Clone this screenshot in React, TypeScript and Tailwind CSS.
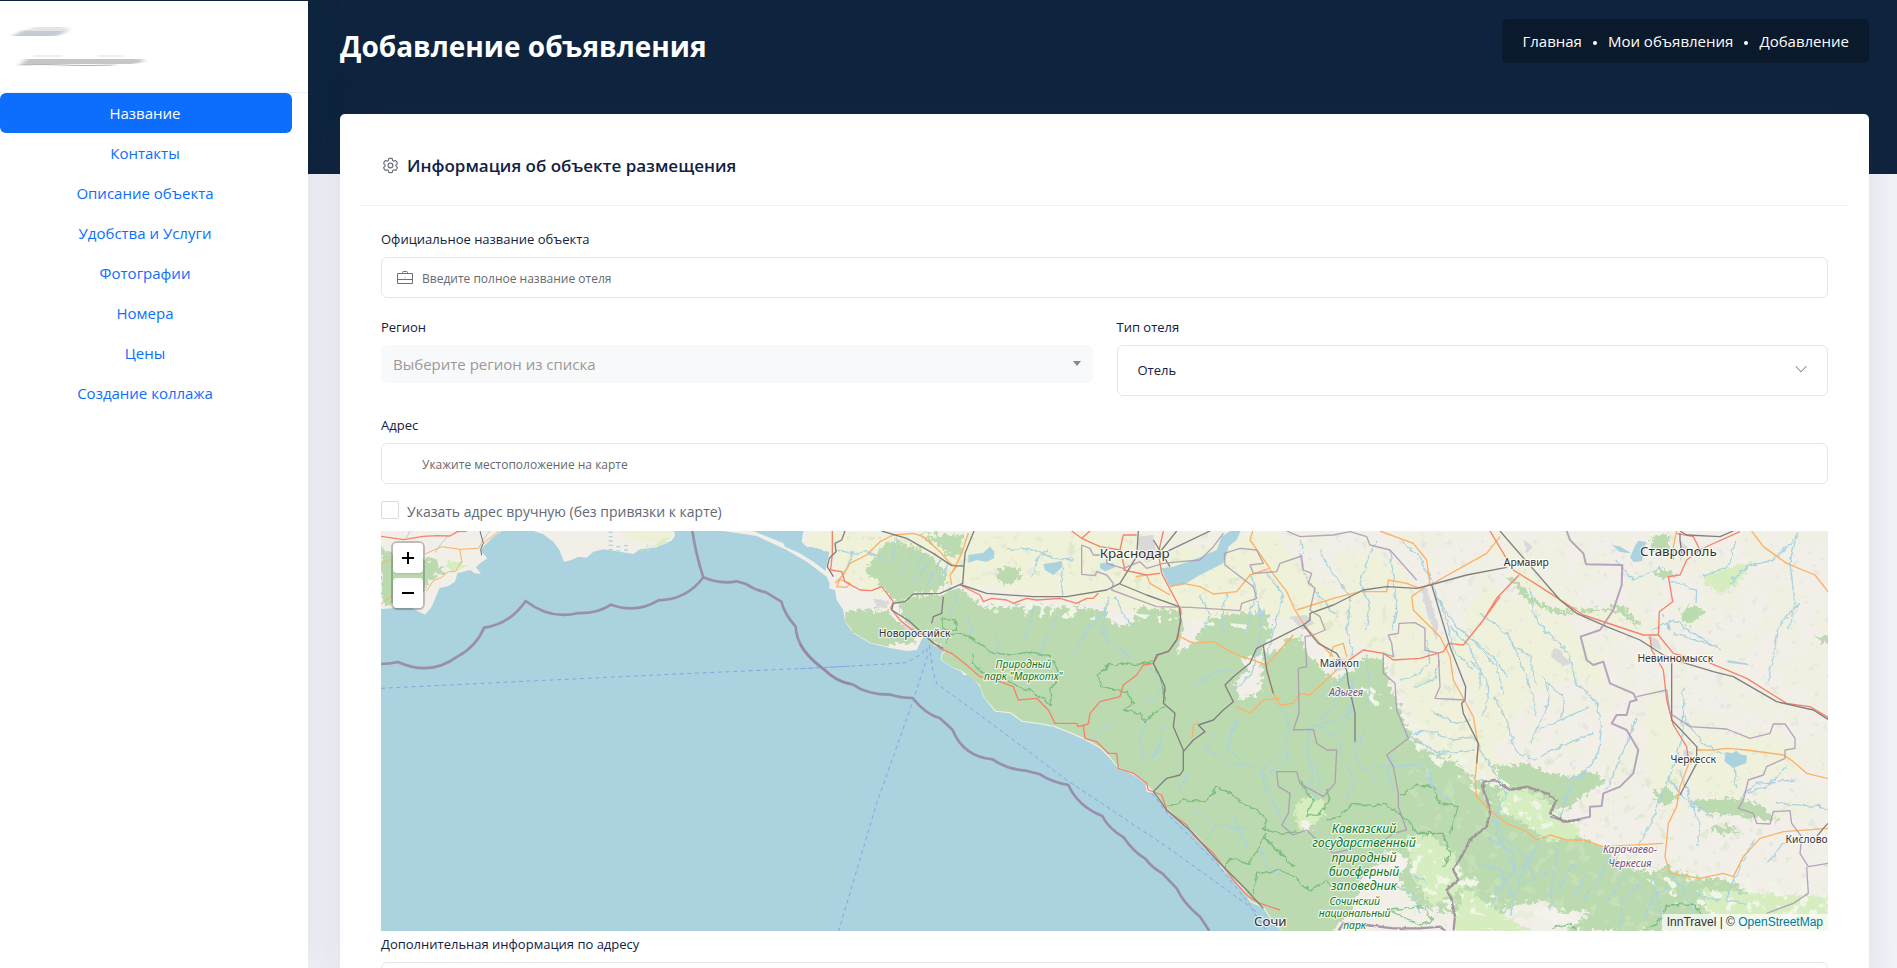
import { ReactNode, useState } from 'react'
import { HiOutlineCog6Tooth } from 'react-icons/hi2'
import { TfiAngleDown } from 'react-icons/tfi'
import { clsx } from 'clsx'

const navItems = [
  'Название',
  'Контакты',
  'Описание объекта',
  'Удобства и Услуги',
  'Фотографии',
  'Номера',
  'Цены',
  'Создание коллажа',
]

const crumbs = ['Главная', 'Мои объявления', 'Добавление']

function BriefcaseIcon({ className }: { className?: string }) {
  return (
    <svg viewBox="0 0 16 14" fill="none" stroke="currentColor" className={className}>
      <path d="M.5 2.5h15v10H.5zM.5 8.5h15" />
      <path d="M5.5 2.5V1.5Q5.5.5 6.5.5h3q1 0 1 1v1" />
      <path d="M7.5 6.5h1" strokeOpacity=".6" />
    </svg>
  )
}

function Sidebar() {
  const [active, setActive] = useState(navItems[0])

  return (
    <aside className="relative w-[308px] shrink-0 bg-white border-t border-[#0e243e] shadow-[0_0_40px_rgba(40,45,60,0.1)]">
      <div className="h-23 border-b border-[#eff0f2]">
        <svg className="w-40 h-20" viewBox="0 0 160 80" aria-hidden="true">
          <defs>
            <filter id="smear" x="-10%" y="-50%" width="120%" height="200%">
              <feGaussianBlur stdDeviation="3 .7" />
            </filter>
          </defs>
          <g filter="url(#smear)">
            <path d="M12 35 24 29 68 28 64 32 56 35z" fill="#c5cbd2" />
            <path d="M34 26h34l-4 4H26z" fill="#e2e5e8" />
            <path d="M20 64 26 58 142 58 143 61 132 63 60 63z" fill="#c6c6c6" />
            <path d="M34 55h28M98 55h26" stroke="#dcdcdc" />
            <path d="M20 64q25-1 44 0t50 0" stroke="#b0b0b0" fill="none" />
          </g>
        </svg>
      </div>
      <nav className="flex flex-col pr-4">
        {navItems.map((item) => (
          <button
            key={item}
            type="button"
            onClick={() => setActive(item)}
            className={clsx(
              'h-10 pr-0.5 rounded-md text-[15px]',
              item === active ? 'bg-[#0d6efd] text-white font-medium' : 'text-[#0d6efd] hover:text-[#0a58ca]'
            )}
          >
            {item}
          </button>
        ))}
      </nav>
    </aside>
  )
}

function TextField({
  id,
  label,
  placeholder,
  icon,
}: {
  id: string
  label: string
  placeholder?: string
  icon?: ReactNode
}) {
  return (
    <div>
      <label htmlFor={id} className="block text-[13px] leading-5 mb-2">
        {label}
      </label>
      <div className="relative">
        {icon && <span className="absolute left-4 top-1/2 -translate-y-1/2 text-[#6c6f80]">{icon}</span>}
        <input
          id={id}
          type="text"
          placeholder={placeholder}
          className="block w-full h-[41px] pl-10 pr-4 pt-0.5 text-[12px] border border-[#e5e7ea] rounded-md placeholder:text-[#666a70] focus:outline-none focus:border-[#0d6efd]"
        />
      </div>
    </div>
  )
}

/*
 * Static map of the Kuban coast, three units to a pixel.
 * The western part and the mainland keep their own origins.
 */
function MapDrawing() {
  return (
    <svg
      viewBox="0 0 4341 1200"
      preserveAspectRatio="xMidYMid slice"
      className="block w-full h-full"
      fill="none"
      strokeLinejoin="round"
      role="img"
      aria-label="Карта"
    >
      <defs>
        <filter id="rough" x="-5%" y="-5%" width="110%" height="110%">
          <feTurbulence type="fractalNoise" baseFrequency=".07" numOctaves="4" seed="4" />
          <feDisplacementMap in="SourceGraphic" scale="40" xChannelSelector="R" yChannelSelector="G" />
        </filter>
        <filter id="wiggle" x="-5%" y="-5%" width="110%" height="110%">
          <feTurbulence type="fractalNoise" baseFrequency=".05" numOctaves="2" seed="9" />
          <feDisplacementMap in="SourceGraphic" scale="18" xChannelSelector="R" yChannelSelector="G" />
        </filter>
        <filter id="jitter" x="-5%" y="-5%" width="110%" height="110%">
          <feTurbulence type="fractalNoise" baseFrequency=".08" numOctaves="2" seed="9" />
          <feDisplacementMap in="SourceGraphic" scale="9" xChannelSelector="R" yChannelSelector="G" />
        </filter>
        <filter id="fields" x="0" y="0" width="100%" height="100%">
          <feTurbulence type="fractalNoise" baseFrequency=".012" numOctaves="5" seed="12" />
          <feColorMatrix values="0 0 0 0 .86  0 0 0 0 .88  0 0 0 0 .7  12 0 0 0 -5.6" />
          <feComponentTransfer>
            <feFuncA type="linear" slope=".45" />
          </feComponentTransfer>
          <feComposite in2="SourceGraphic" operator="in" />
        </filter>
        <filter id="meadow" x="0" y="0" width="100%" height="100%">
          <feTurbulence type="fractalNoise" baseFrequency=".03" numOctaves="5" seed="31" />
          <feColorMatrix values="0 0 0 0 .66  0 0 0 0 .84  0 0 0 0 .54  0 14 0 0 -8.6" />
          <feComponentTransfer>
            <feFuncA type="linear" slope=".35" />
          </feComponentTransfer>
          <feComposite in2="SourceGraphic" operator="in" />
        </filter>
        <filter id="bare" x="0" y="0" width="100%" height="100%">
          <feTurbulence type="fractalNoise" baseFrequency=".03" numOctaves="5" seed="77" />
          <feColorMatrix values="0 0 0 0 .87  0 0 0 0 .92  0 0 0 0 .78  0 0 14 0 -8.2" />
          <feComposite in2="SourceGraphic" operator="in" />
        </filter>
        <filter id="specks" x="0" y="0" width="100%" height="100%">
          <feTurbulence type="fractalNoise" baseFrequency=".035" numOctaves="3" seed="52" />
          <feColorMatrix values="0 0 0 0 .7  0 0 0 0 .7  0 0 0 0 .7  0 0 16 0 -10.8" />
          <feComponentTransfer>
            <feFuncA type="linear" slope=".4" />
          </feComponentTransfer>
          <feComposite in2="SourceGraphic" operator="in" />
        </filter>
        <filter id="groves" x="0" y="0" width="100%" height="100%">
          <feTurbulence type="fractalNoise" baseFrequency=".03" numOctaves="4" seed="18" />
          <feColorMatrix values="0 0 0 0 .6  0 0 0 0 .76  0 0 0 0 .48  0 16 0 0 -10.6" />
          <feComponentTransfer>
            <feFuncA type="linear" slope=".4" />
          </feComponentTransfer>
          <feComposite in2="SourceGraphic" operator="in" />
        </filter>
      </defs>

      <rect width="4341" height="1200" fill="#aad3df" />

      {/* Crimea and Taman */}
      <g transform="translate(-33 -123)">
        <path
          fill="#f2efe9"
          d="M33 123H395L370 140 345 165 330 180 352 205 330 220 318 232 333 252 315 250 300 240 262 250 255 275 235 288 208 295 198 320 185 350 165 374 120 352 33 357z"
        />
        <path
          fill="#f2efe9"
          d="M490 123 520 133 550 155 568 180 582 215 605 210 625 200 650 203 670 185 700 178 740 184 790 192 810 178 860 172 905 152 915 138 912 123z"
        />
        <path fill="#eef0d5" d="M740 123h172l-8 20-60 12-50-4z" />
        <path fill="#bcdab0" filter="url(#rough)" d="M33 178 60 182 80 205 140 200 205 212 220 245 180 270 165 300 130 340 60 350 33 330z" />
        <path fill="#d6edc0" filter="url(#rough)" d="M225 215h50l20 12-40 15-30-8zM790 182l50-14 50-20 10 8-60 18z" />
        <path stroke="#aad3df" strokeWidth="12" strokeDasharray="4 9" d="M722 125v56M745 168v16M768 165v20" />
        <path stroke="#aad3df" strokeWidth="3" d="M360 123l-20 25-12 22M232 140l-22 25-14 22M120 123l-10 20" />
        <path stroke="#f6826b" strokeWidth="4" d="M33 139 100 149 160 139 200 137 240 138 262 125 290 124" />
        <path stroke="#fcb165" strokeWidth="3" d="M388 123 345 155 325 175 270 178 215 170 165 192M33 220 60 208M270 178 275 215 255 245 235 245 215 262 190 272 170 302M33 342 65 318" />
        <path stroke="#707070" strokeWidth="3" d="M330 123 340 160 332 178 335 196" />
        <path stroke="#9787a5" strokeWidth="8" strokeOpacity=".9" d="M967 123Q978 195 1000 262Q950 330 865 331Q800 371 723 344Q680 372 625 369Q540 390 467 333Q420 402 342 413Q320 468 262 500Q180 560 84 516Q60 522 33 522M1000 262Q1050 284 1100 274L1130 283Q1155 300 1188 307L1234 335Q1243 372 1277 410Q1280 480 1362 538Q1400 575 1440 582" />
        <path stroke="#86a4e6" strokeWidth="3" strokeDasharray="12 11" d="M33 595 400 577 900 553 1440 529" />
      </g>

      {/* mainland */}
      <g transform="translate(1257 -33)">
        <path
          fill="#f2efe9"
          d="M10 33 5 65 20 80 90 85 75 160 90 185 87 205 105 210 110 240 130 270 135 305 160 340 210 370 265 383 320 393 350 390 362 365 370 350 388 358 402 378 440 388 425 400 422 420 460 445 485 455 490 465 510 465 540 500 550 530 585 575 630 580 665 605 715 612 760 620 810 640 855 660 900 685 925 710 955 745 1000 765 1035 790 1040 815 1060 820 1090 860 1130 895 1180 940 1200 965 1230 995 1270 1050 1330 1110 1350 1145 1390 1165 1410 1195 1445 1233H3084V33z"
        />
        <path fill="#f2efe9" d="M-232 33H-140L-50 70-45 80 0 100 40 125 80 155 95 160V205L80 170 20 125-40 90-130 48z" />
        <path fill="#f0f1d9" filter="url(#jitter)" d="M20 38H1050L1090 90 1300 70 1370 38 1420 38 1480 110 1560 190 1620 230 1640 420 1580 380 1500 290 1100 300 800 230 500 190 350 200 250 230 120 180 100 100 20 75z" />
        <path fill="#f0f1dc" filter="url(#rough)" d="M1600 100 1780 120 1860 240 1950 420 1990 560 2060 620 2120 780 2020 760 1900 690 1820 560 1780 430 1690 380 1640 300zM2040 200 2180 240 2300 300 2400 420 2420 500 2300 480 2200 520 2080 700 2020 560 1960 380zM2060 50 2180 140 2320 260 2500 260 2500 330 2300 280 2160 200zM2560 480 2620 600 2660 760 2580 840 2540 700zM2660 640 2960 660 3000 760 2840 780 2800 840 2680 830z" />
        <path filter="url(#fields)" fill="#fff" d="M90 40H3084V900L2300 900 1900 600 1600 420 1200 320 800 250 120 190z" />
        <path filter="url(#specks)" fill="#fff" d="M120 40H3084V950L2300 900 1900 500 1600 300 1200 220 800 200 160 180z" />
        <path filter="url(#groves)" fill="#fff" d="M140 50H1050L1600 250 2100 600 2300 700 3084 860V1130H2300L1900 680 1500 260 600 180 160 170z" />

        {/* forests */}
        <path
          fill="#bcdab0"
          d="M135 275 137 305 162 338 212 368 265 380 280 340 200 280zM440 390 428 402 424 420 460 443 487 453 540 495 552 530 587 572 632 577 667 602 717 609 762 617 812 637 857 657 902 682 927 707 957 742 1002 762 1037 787 1062 817 1092 857 1132 892 1182 937 1232 992 1272 1047 1332 1107 1352 1142 1392 1162 1412 1192 1447 1233H1600V1100L1300 900 1000 600 700 450z"
        />
        <g fill="#bcdab0" filter="url(#rough)">
          <path d="M190 150 220 120 250 70 300 65 350 85 400 110 430 150 440 190 400 215 340 222 300 250 270 235 240 190z" />
          <path d="M140 275 180 265 260 275 290 300 330 330 355 345 340 372 280 372 210 358 165 335 145 305z" />
          <path d="M290 255 350 225 420 225 470 205 500 220 550 260 620 262 700 255 780 262 860 260 910 280 960 320 1000 310 1010 260 1100 270 1140 270 1150 320 1130 400 1180 370 1220 300 1300 280 1400 280 1420 330 1380 400 1320 420 1350 450 1300 490 1320 540 1380 520 1390 400 1440 390 1460 350 1500 350 1520 400 1560 440 1600 480 1660 450 1690 410 1750 420 1770 500 1800 560 1830 640 1900 700 1960 720 2020 780 2100 800 2160 790 2200 810 2220 870 2300 930 2400 980 2500 1050 2640 1060 2700 1110 2620 1160 2500 1150 2300 1180 2200 1130 2100 1180 1950 1180 1840 1150 1800 1080 1750 1020 1700 1050 1650 1180 1600 1225 1460 1222 1420 1175 1370 1132 1340 1090 1280 1030 1210 945 1140 880 1080 825 1050 795 1005 745 955 728 905 670 855 645 805 622 725 595 675 590 615 565 565 515 505 445 435 395 390 350 330 320z" />
          <path d="M590 150 620 140 655 145 660 175 620 195 595 185zM360 45h125l5 60-30 10-50-40z" />
          <path d="M2080 740 2180 730 2240 760 2320 770 2360 750 2420 780 2360 820 2300 870 2220 840 2120 830zM2560 820l40-12 40 20-30 25-40-5zM2680 840l130-5 70 20 60 50-80-10-160-20zM2730 920l50-5 40 20-60 8z" />
          <path d="M2570 45h36l8 40-36 26-36-36zM2570 150h40l20 15-50 15zM2640 275l50-20 20 20-20 26-36 16zM3040 350h60v30z" />
          <path d="M2040 900 2200 930 2300 1000 2330 1080 2200 1150 2100 1140 2040 1000zM2600 1040 2680 1070 2780 1080 2840 1110 2820 1180 2900 1200 2800 1233 2300 1233 2360 1180 2440 1100z" />
          <path d="M2110 165 2160 190 2190 230 2250 262 2330 272 2400 265 2470 255 2500 290 2520 330 2490 300 2440 268 2380 280 2270 280 2190 250 2150 205z" />
        </g>
        <g fill="#d6edc0" filter="url(#rough)">
          <path d="M1480 860 1520 830 1570 840 1575 880 1540 920 1500 930z" />
          <path d="M1820 950 1900 950 1960 1000 1990 1100 1900 1160 1850 1090z" />
          <path d="M2700 170 2790 140 2860 130 2820 180 2780 220 2740 210zM2100 800 2160 805 2230 830 2300 900 2340 920 2320 960 2240 960 2160 900 2100 880zM2700 1110 3084 1130V1233H2750zM1990 1100 2100 1180 2200 1233H1960z" />
        </g>
        <g fill="#f4f2ea" filter="url(#rough)">
          <path d="M1755 990 1800 1000 1830 1030 1800 1060 1760 1040zM1500 910l20-10 15 20-20 15zM2220 1160l80 15 40 30-60 10-70-20z" />
        </g>
        <path filter="url(#bare)" fill="#fff" d="M500 215 900 270 1500 330 1900 650 2300 900 2200 940 1860 700 1800 640 1600 420 1300 320 900 300 600 290z" />
        <path filter="url(#meadow)" fill="#fff" d="M2080 760 2500 1000 3084 1100V1233H1820L1850 900 1780 640z" />
        <path filter="url(#bare)" fill="#fff" d="M1800 960 1900 980 2020 1060 2060 1120 2200 1160 2120 1200 1850 1150zM2500 1040 3084 1100V1200L2650 1180z" />

        {/* lakes and reservoirs */}
        <g fill="#aad3df">
          <path d="M505 105 550 98 570 80 583 95 582 115 560 125 530 120 505 128zM730 132 760 128 785 122 788 140 760 165 735 150zM900 130h40l5 12-30 12-15-10z" />
          <path d="M1083 145 1120 140 1180 120 1250 90 1265 50 1290 33 1322 33 1310 60 1285 80 1280 105 1270 130 1200 165 1150 195 1110 200 1095 170z" />
          <path d="M2490 112 2505 78 2515 62 2538 66 2532 95 2525 124 2500 126zM2436 74l25 6 33 20-35-4zM2777 696l20 4 12-8 10 10 22 5-2 22-40 15-26-20zM2780 420l60 10 8 6-62-8zM2598 305l12 10 2 18-10-6zM2585 280l8 6-4 8z" />
        </g>
        {/* towns */}
        <g fill="#d9d9d9" filter="url(#jitter)">
          <path d="M1010 50 1060 45 1070 110 1040 130 1015 90zM1468 290l50-5 25 25-35 20zM1590 420l50-5 5 30-40 10zM1860 200l20 5 35 110-5 50-30-90zM220 235l50 10-10 20-30-5zM300 305l40 15 25 30-40-10z" />
          <path d="M2260 380l20 10 30 40-20 10-35-30zM2545 345l30 15 10 30-30-10zM2650 690l30 5-5 40-25-15zM2170 60l30 20-20 20zM2640 60l30 30-30 30z" />
        </g>

        {/* rivers */}
        <g stroke="#aad3df" strokeWidth="4" filter="url(#wiggle)">
          <path d="M290 50l-12 40 5 30-10 20M340 90l-30 55-15 15M370 100l-25 55-8 30M395 115l-35 50-10 20M420 120l-25 50-15 30M445 130l-30 60M105 90l60 10 40-5 60 30M110 185l30-40 20-50M620 90l50-5 50 10 40 20 60 5M700 170l10-50 30-30M790 140l-5 60 5 30M930 230l-25 60-30 20-60 100M945 230l30 60 20 25M920 250l-10 60 15 50M450 200l20 40-20 40M500 290l15 40-10 40M585 340l10 40-25 30M700 260l-15 60-10 40M770 290l-30 60-20 50M900 320l20 40 70 50M1050 440l40 60-60 60M960 600l-60 30-15 25M1040 600l-20 60 10 50M1090 620l-10 60-30 40" />
          <path d="M1200 225l30 60-20 50M1280 220l-15 70 10 50M1350 160l20 60-20 60-10 60M1370 250l20 40M1180 500l60-40 60-10M1210 680l80 50 70 10M1160 760l-30 60M1370 240l15 60-15 100-15 60-60 60M1400 160l50 60-15 60-30 110-5 80M1440 550l25 60-10 60 10 60M1500 100l10 60 50 70 50 60M1560 90l30 60 60 80-10 100 20 80M1730 60l-30 70-20 60 30 60-10 80M1640 460l-60 80M1660 470l-15 120-50 60M1530 620l-10 80 20 60M1670 570l-60 30-80 20M1700 420l10 90-10 50M1730 780l-60-60-10-100M1720 740l90 0 60-10M1840 500l60-20 20-60" />
          <path d="M1180 870l60 40 110 20M1250 910l-30 50M1300 890l40 90M1380 980l20 60 40 20M1410 830l30 60 20 20M1540 840l20-60-20-60M1640 840l20-40-15-60M1390 760l30 60M1400 820l-20-60 60-60" />
          <path d="M1500 60l10 40M1800 60l60 50 50 110 30 80 20 90 60 60M1910 230l60 90 110 90 40 60M1940 310l60 60 40 80 0 60M2010 420l50 60 5 60-20 50M1800 480l60-20 30-40-10-60M1820 650l60-20 80 30 60-10M1890 570l80 40 40-10M1770 90l10 80 10 100-15 60" />
          <path d="M2190 200l10 80 40 60 60 50 30 100 60 60 15 70-10 80-40 60-60 20M2370 740l-60 60-30 100M2040 280l80 60 40 80 40 110 10 60M2230 470l20 60-30 80-30 60M2240 490l50 40-5 70M2370 560l-90 40-70 30M2380 640l-100 40-60 30M2510 590l-30 80-60 140M2650 500l-5 160-40 120-40 100-60 120M2650 590l60 80 90 50 10 90M2560 330l60-30 60 40 80 50M2620 340l130 40M2590 140l-90 40-50-60M2610 180l80 30-2 40M2810 60l-30 80-70 30M2990 40l-20 90 15 120-20 80M3000 250l-60 60-35 170M2980 60l-60 60-80 20-50 50" />
          <path d="M2640 750l40 110 20 60-10 60M2600 770l50 60 90 60M2840 1150l-60-10 20-60 60-120M2960 740l-60 60-60 20M2980 780l-110 10-50 40M2930 850l130 10 24 5M3000 950l-50 20-50 60" />
          <path d="M2080 530l40 70 30 100 60 20M2000 340l90 100 20 80M2130 370l60 40 20 90M1620 500l-20 60-40 40M1250 640l-40 60M1310 600l-30 80 40 40M1560 620l60 40 10 60M1470 700l-60 60M1540 780l-30 40M1700 620l-20 50M1780 700l-20 60 30 60M1860 740l40 60" />
        </g>
        <g stroke="#aad3df" strokeWidth="4" filter="url(#wiggle)">
          <path d="M2080 900l40 60 60 50 20 60M2060 950l80 50 10 80M2100 860l-10 80 60 120M2220 960l-60 110-30 120M2280 960l-20 110-10 100M2330 1020l-40 60-40 80M2440 990l-40 80-50 70M2560 1050l10 60 20 110M2530 1080l-60 60-10 90M2480 1060l-60 90M2610 1060l60 60 90 20M2640 1110l60 80M1790 1100l50 20 20 60M1830 1060l60 30" />
          <path d="M1810 640l110 60 100-10M2020 650l60 100 40 70-30 60M1960 850l-60-50-20-80M2040 1030l60 20 40 80M2180 1030l-60 40-50 90M2240 1060l-70 30M2360 1060l-40 70M2600 1100l-40 30-30 70" />
        </g>

        {/* protected areas */}
        <g stroke="#63b46e" strokeOpacity=".75" strokeWidth="4" filter="url(#wiggle)">
          <path d="M425 295l40 5 5 30-40-5zM440 375 445 345 490 340 540 370 580 400 640 405 690 395 750 410 770 440 780 470 750 510 755 555 690 510 650 500 610 470 550 460 520 430 515 400" />
          <path d="M900 495 895 465 930 430 990 435 1030 430 1060 425M900 500 940 510 980 515 1000 550 970 570 1020 580 1035 605 1060 580 1095 560M1065 440 1090 490 1095 550" />
          <path d="M1100 860 1150 840 1220 845 1240 820 1250 800 1290 820 1330 850 1370 870 1400 900 1390 930 1440 940 1500 935M1400 940 1360 1010 1350 1030 1290 1015 1270 1045M1360 1130 1370 1060 1440 1050 1480 1070 1530 1110 1580 1080 1600 1110M1390 950 1430 990 1460 1020 1480 1040" />
          <path d="M1580 900 1620 890 1660 850 1720 860 1750 850 1780 870 1815 890 1850 940 1930 940 1950 1000 1930 1040M1800 830 1850 795 1900 800 1920 850 1975 860 1950 940M1500 780l20 40 20 20-20 50 40-10 30-40-10-30" />
          <path d="M1765 1170 1870 1160 1900 1200 1860 1215zM2540 1233 2590 1190 2600 1155 2680 1152 2710 1190M2260 1225 2310 1210 2330 1233" />
        </g>

        {/* minor and trunk roads */}
        <g stroke="#fcb165" strokeWidth="4">
          <path d="M105 190 130 165 150 130 200 105 240 65 280 45 340 40 370 50 420 95 450 130 470 140 450 165 455 195M110 200 140 202 150 190 120 178zM505 40l-20 60-30 60" />
          <path d="M1007 170 1040 165 1050 190 1110 225M1110 200 1150 190 1200 200 1240 222 1310 215 1350 165 1410 145 1350 60 1358 33M1410 150 1460 215 1485 270 1510 310 1560 370 1600 410M1490 270 1600 235 1680 215 1760 215 1765 180 1820 190 1860 205M1140 350 1180 370 1240 365 1300 400 1400 435M1480 345 1400 435 1415 510 1440 555 1480 550 1500 520 1530 525 1610 450M1440 535 1390 540 1350 580 1310 560M1590 410 1600 380 1630 370 1640 410M1740 33 1840 70 1880 120 1890 190 1835 230 1840 270 1920 350 1950 410 1960 480 2020 590 2035 680 2025 780 2030 830 2060 860 2080 880 2120 910 2180 935 2210 960 2250 945 2300 960 2350 960 2410 980 2590 970M1890 195 2060 100 2100 50M1178 650 1180 615 1195 608" />
          <path d="M2690 690 2740 690 2780 685 2840 690 2950 705 2980 725 3020 760 3084 776M2670 720 2640 800 2630 860 2605 910 2595 1010 2610 1060 2700 1075 2770 1060 2800 1070 2830 1010 2880 955 2950 935 3084 925M2855 33 2890 80 2960 130 3045 165 3084 215M2620 120l0-40 10-47" />
        </g>
        <g stroke="#f6826b" strokeWidth="4">
          <path d="M97 33V100L92 150 125 155 135 185 180 210 215 212 245 200 280 245 272 265 300 300 330 325 380 350 420 385 455 400 500 435 540 470 600 485 640 500 655 540 710 535 745 570 765 610 830 610 835 620 865 612 870 580 900 545 960 530 970 495 1010 465 1030 435 1060 430 1075 405 1110 390 1135 350 1143 270 1085 160 1075 100 1090 33" />
          <path d="M480 195 540 225 550 245 575 235 620 240 640 250 680 235 710 240 780 235 830 250 860 235 880 235 895 220M850 615 855 655 890 665 925 700 950 700 955 745 1000 760 1040 790 1045 810 1085 825 1100 870 1160 915 1180 945 1240 1000 1300 1080 1345 1130 1380 1150 1440 1170" />
          <path d="M815 33 845 55 870 33M845 55 900 80 960 90M960 90 970 45 1010 45M970 150 1040 165 1080 160M960 85l15 65M1640 425 1690 390 1750 400 1780 420 1860 415 1930 395 1945 370 1990 375 2050 300 2100 230M2070 33 2140 150 2220 200 2350 285 2530 345 2575 345M2157 165 2090 235 2040 315" />
          <path d="M2575 345 2578 275 2618 245 2605 170 2640 165 2660 120 2700 90 2730 75 2820 35M2630 40 2680 50 2700 90M2575 345 2620 400 2720 425 2840 475 2960 550 3030 560 3084 592M2550 350 2555 390 2590 450 2600 540 2620 615 2660 680 2665 720" />
        </g>

        {/* railways */}
        <g stroke="#808080" strokeWidth="4">
          <path d="M135 33 125 60 105 70 108 95 88 115 82 140 100 170M245 33 320 55 400 100 455 137 492 138M522 33 495 100 488 190 420 220 340 222 315 245 280 250 275 270 330 305 400 370 430 385M485 195 560 220 700 230 800 230 920 210 960 190 1010 110 1015 33M430 230 425 280 400 290 395 310M960 192 1040 225 1137 260 1143 300 1130 360 1105 395 1070 405 1060 430 1080 470 1095 500 1090 550 1125 580 1120 620 1150 690 1150 750 1140 765 1100 775 1060 815" />
          <path d="M1060 815 1100 870 1180 940 1250 1020 1340 1110 1390 1165M1150 695 1180 660 1215 635 1195 615 1240 600 1270 570 1300 545 1275 495 1300 470 1350 430 1370 385 1460 340 1510 315 1530 300 1530 280 1600 255 1690 210 1760 200 1850 205 1890 195 2000 165 2120 142M1390 375 1400 450 1420 520M1510 315 1555 370 1610 400 1640 450 1645 490 1665 580 1665 665M1895 195 1950 380 1997 500 1995 540 1985 550 1990 580 2035 670 2030 730" />
          <path d="M1130 33 1085 90M1060 60l50 80M1100 95 1230 33M2100 33 2280 240 2330 280 2420 320 2520 360 2590 405 2640 425 2740 455 2800 470 2930 545 3040 570 3084 598M2615 405V600L2690 680V730L2640 825M2640 33 2660 45 2760 50 2800 33M3050 950l20-25 14-15M2640 40v20l5 40" />
        </g>

        {/* region borders */}
        <g stroke="#ab98b3" strokeWidth="4" strokeOpacity=".85">
          <path d="M845 75V163L885 167 890 155 920 165 940 190 935 210 1070 260 1170 262M845 75 870 85 880 105 920 105 920 130 970 145 1020 125 1040 145 1090 130 1140 125 1200 120 1240 80 1270 40" />
          <path d="M1170 262 1320 272 1325 250 1370 235 1360 200 1275 135 1273 100 1320 85 1370 90 1390 130 1350 135 1360 160 1430 155 1440 130 1505 108 1510 150 1535 160 1525 190 1545 205 1530 270 1560 290 1575 330 1540 345 1515 350 1520 440 1495 445 1497 580 1480 630 1540 628 1550 670 1580 690 1610 690 1605 790 1570 830 1500 790 1490 755 1430 755 1435 800 1470 820 1465 880 1445 915 1480 945 1520 930 1550 960 1600 1000 1660 985M1755 960 1780 940 1820 930 1795 860 1795 820 1780 740 1760 705 1825 655 1790 570 1785 490 1750 460 1750 400 1780 410 1775 370 1765 345 1795 340 1797 310 1845 308 1875 325 1875 390 1915 400 1920 500 1905 535 1995 540" />
          <path d="M1460 33 1500 50 1600 45 1650 35 1700 50 1710 75 1770 90 1850 180" />
          <path strokeWidth="6" d="M2300 33 2310 60 2350 100 2358 133 2467 135 2465 195 2440 270 2400 330 2342 350 2360 420 2380 435 2410 425 2430 490 2500 520 2510 540 2490 545 2480 585 2450 585 2435 610 2480 630 2515 690 2500 760 2460 800 2410 820 2405 858 2370 860 2370 890 2300 905 2250 890" />
          <path d="M2510 530 2600 510 2610 580 2670 620 2780 627 2850 655 2910 640 2920 612 2955 612 2985 655 2985 685 2955 690 2955 715 2900 740 2890 765 2845 780 2830 840 2815 865 2860 880 2870 910 2910 912 2920 875 2970 872 2975 910 3005 950 3000 1000 3025 1040 3084 1030M3020 1040 3025 1120 2980 1150 2900 1180" />
        </g>
        <path filter="url(#jitter)" stroke="#9a8896" strokeWidth="7" strokeOpacity=".85" d="M2050 785 2085 780 2130 810 2180 800 2240 820 2270 840 2250 880 2290 905 2340 900M2050 785 2050 810 2065 850 2070 880 2060 920 2010 960 1990 1000 1960 1050 1975 1080 1940 1110 1955 1140 1965 1190 1960 1233M1615 1233 1630 1210 1700 1215 1780 1225 1860 1225 1920 1220 1935 1233" />

        {/* state waters */}
        <path stroke="#9787a5" strokeWidth="8" strokeOpacity=".9" d="M0 372Q20 410 72 448Q110 486 158 493Q200 524 272 524Q300 533 338 534Q375 582 420 595L458 630Q490 710 578 718Q620 748 678 752L720 763Q755 786 805 795Q835 860 907 888Q925 925 972 953Q1000 995 1035 1015Q1055 1042 1087 1060L1130 1105Q1150 1150 1200 1190Q1215 1212 1228 1233" />
        <g stroke="#86a4e6" strokeWidth="3" strokeDasharray="12 10">
          <path d="M372 390 368 400 320 428 160 438 0 446M380 385 382 410 340 540 230 850 116 1233M388 375 398 450 410 490 560 600 800 780 1100 980 1350 1160 1400 1233M1055 820 1110 890 1250 1030 1370 1180" />
        </g>
      </g>

      <g
        fontFamily="Noto Sans, Open Sans, sans-serif"
        textAnchor="middle"
        stroke="#fff"
        strokeOpacity=".75"
        strokeWidth="7"
        fill="#333"
        fontSize="31"
        style={{ paintOrder: 'stroke' }}
      >
        <g fontSize="40">
          <text x="2261" y="81">Краснодар</text>
          <text x="3892" y="74">Ставрополь</text>
          <text x="2668" y="1186">Сочи</text>
        </g>
        <text x="1601" y="318">Новороссийск</text>
        <text x="2875" y="407">Майкоп</text>
        <text x="3436" y="106">Армавир</text>
        <text x="3883" y="393">Невинномысск</text>
        <text x="3937" y="697">Черкесск</text>
        <text x="4340" y="935" textAnchor="end">Кислово</text>
        <g fontStyle="italic" fill="#71547f">
          <text x="2895" y="495">Адыгея</text>
          <text x="3747" y="967">Карачаево-</text>
          <text x="3747" y="1007">Черкесия</text>
        </g>
        <g fontStyle="italic" fill="#0f7a1f" fontSize="31">
          <text x="1927" y="411">Природный</text>
          <text x="1927" y="447">парк "Маркотх"</text>
          <text x="2921" y="1122">Сочинский</text>
          <text x="2921" y="1158">национальный</text>
          <text x="2921" y="1194">парк</text>
        </g>
        <g fontStyle="italic" fill="#0f7a1f" fontSize="37">
          <text x="2949" y="906">Кавказский</text>
          <text x="2949" y="949">государственный</text>
          <text x="2949" y="992">природный</text>
          <text x="2949" y="1035">биосферный</text>
          <text x="2949" y="1078">заповедник</text>
        </g>
      </g>
    </svg>
  )
}

function LocationMap() {
  return (
    <div className="relative h-100 overflow-hidden bg-[#aad3df]">
      <MapDrawing />
      <div className="absolute left-3 top-3 flex flex-col gap-[5px] rounded-sm ring-2 ring-black/20">
        <button type="button" aria-label="Приблизить" className="flex items-center justify-center size-[30px] bg-white rounded-sm shadow">
          <svg className="w-3 h-3" viewBox="0 0 12 12" stroke="#000" strokeWidth="2">
            <path d="M0 6h12M6 0v12" />
          </svg>
        </button>
        <button type="button" aria-label="Отдалить" className="flex items-center justify-center size-[30px] bg-white rounded-sm shadow">
          <svg className="w-3 h-3" viewBox="0 0 12 12" stroke="#000" strokeWidth="2">
            <path d="M0 6h12" />
          </svg>
        </button>
      </div>
      <div className="absolute right-0 bottom-0 px-[5px] bg-white/70 font-['Liberation_Sans',Arial,sans-serif] text-[12px] leading-[17px] text-[#333]">
        InnTravel | ©{' '}
        <a href="#osm" className="text-[#0078a8]">
          OpenStreetMap
        </a>
      </div>
    </div>
  )
}

export default function App() {
  const [manual, setManual] = useState(false)

  return (
    <div className="flex h-screen overflow-hidden bg-[#f4f5fb] bg-linear-to-b from-[#0e243e] from-[174px] to-[#f4f5fb] to-[174px] text-[#122142] font-['Open_Sans','Noto_Sans',sans-serif]">
      <Sidebar />

      <div className="flex-1 min-w-0 pl-8 pr-7">
        <header className="flex items-start justify-between h-[114px] pt-[19px]">
          <h1 className="pt-2 text-[28px] leading-[38px] font-bold text-white">Добавление объявления</h1>
          <nav className="flex items-center h-11 px-5 rounded-[5px] bg-[#0a192b] text-[15px] text-white">
            {crumbs.map((crumb, i) => (
              <div key={crumb} className="flex items-center">
                {i > 0 && <span className="size-1 mx-[11px] mt-1 rounded-full bg-white" />}
                <a href="#crumb">{crumb}</a>
              </div>
            ))}
          </nav>
        </header>

        <main className="px-5 bg-white rounded-[5px] shadow-[0_0_50px_rgba(40,45,60,0.12)]">
          <div className="flex items-center gap-[7px] h-[92px] px-[21px] pt-3 border-b border-[#eff0f2]">
            <HiOutlineCog6Tooth className="size-[19px] text-[#6c6f80]" />
            <h2 className="text-[17px] font-semibold">Информация об объекте размещения</h2>
          </div>

          <form className="px-[21px] pt-[23px]" onSubmit={(e) => e.preventDefault()}>
            <TextField
              id="name"
              label="Официальное название объекта"
              placeholder="Введите полное название отеля"
              icon={<BriefcaseIcon className="w-4 h-[14px]" />}
            />

            <div className="grid grid-cols-2 gap-6 mt-[19px]">
              <div>
                <label htmlFor="region" className="block text-[13px] leading-5 mb-2">
                  Регион
                </label>
                <div className="relative">
                  <select
                    id="region"
                    className="block w-full h-[38px] px-3 text-[15px] text-[#999] bg-[#f8f9fa] rounded-md appearance-none focus:outline-none"
                  >
                    <option>Выберите регион из списка</option>
                  </select>
                  <span className="absolute right-3 top-4 border-x-4 border-x-transparent border-t-5 border-t-[#888] pointer-events-none" />
                </div>
              </div>
              <div>
                <label htmlFor="type" className="block text-[13px] leading-5 mb-2">
                  Тип отеля
                </label>
                <div className="relative">
                  <select
                    id="type"
                    className="block w-full h-[51px] px-5 text-[13px] bg-white border border-[#e5e7ea] rounded-md appearance-none focus:outline-none"
                  >
                    <option>Отель</option>
                  </select>
                  <TfiAngleDown className="absolute right-[21px] top-[18px] size-3 text-[#5d6180] pointer-events-none" />
                </div>
              </div>
            </div>

            <div className="mt-[19px]">
              <TextField id="address" label="Адрес" placeholder="Укажите местоположение на карте" />
            </div>

            <label className="flex items-center gap-2 h-[47px] pt-2 text-[14px] text-[#646873]">
              <input
                type="checkbox"
                checked={manual}
                onChange={(e) => setManual(e.target.checked)}
                className="size-[18px] mb-1 bg-white border border-[#d9dbde] rounded-xs appearance-none checked:bg-[#0d6efd]"
              />
              Указать адрес вручную (без привязки к карте)
            </label>

            <LocationMap />

            <div className="pt-[3px]">
              <TextField id="extra" label="Дополнительная информация по адресу" />
            </div>
          </form>
        </main>
      </div>
    </div>
  )
}
